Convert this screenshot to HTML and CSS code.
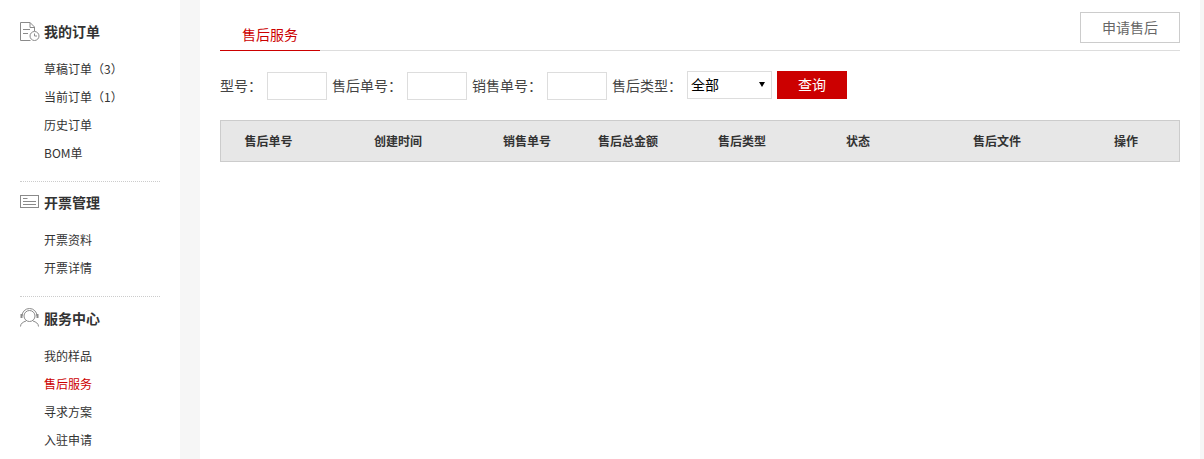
FILE: index.html
```html
<!DOCTYPE html>
<html lang="zh-CN">
<head>
<meta charset="utf-8">
<title>售后服务</title>
<link rel="stylesheet" href="styles.css">
</head>
<body>
<div class="page">
  <aside class="sidebar">
    <section class="group group-first">
      <h3 class="group-title">
        <svg class="icon" width="24" height="20" viewBox="0 0 24 20" fill="none" stroke="#8a8a8a" stroke-width="1">
          <path d="M10.500 19.500H.5V1.500H10L14.500 6V10"/>
          <path d="M10 1.500V6.500H14.500"/>
          <path d="M3 8.500H10M3 12.500H8"/>
          <circle cx="14.500" cy="15" r="4.500"/>
          <path d="M14.500 12.500V15H17"/>
        </svg>
        <span>我的订单</span>
      </h3>
      <ul class="menu">
        <li>草稿订单（3）</li>
        <li>当前订单（1）</li>
        <li>历史订单</li>
        <li>BOM单</li>
      </ul>
    </section>
    <section class="group group-second">
      <h3 class="group-title">
        <svg class="icon" width="24" height="20" viewBox="0 0 24 20" fill="none" stroke="#8a8a8a" stroke-width="1">
          <rect x=".5" y="3.500" width="18" height="12"/>
          <path d="M3 6.500H7.500M3 9.500H16M3 12.500H16"/>
        </svg>
        <span>开票管理</span>
      </h3>
      <ul class="menu">
        <li>开票资料</li>
        <li>开票详情</li>
      </ul>
    </section>
    <section class="group">
      <h3 class="group-title">
        <svg class="icon" width="24" height="20" viewBox="0 0 24 20" fill="none" stroke="#8a8a8a" stroke-width="1">
          <circle cx="9.500" cy="8" r="5.500"/>
          <path d="M2 8A7.500 7.500 0 0 1 17 8"/>
          <path d="M.5 18.500C.5 15.500 3 14 6 13M18.500 18.500C18.500 15.500 16 14 13 13"/>
          <path d="M1.500 6V10M17.500 6V10" stroke-width="2"/>
        </svg>
        <span>服务中心</span>
      </h3>
      <ul class="menu">
        <li>我的样品</li>
        <li class="active">售后服务</li>
        <li>寻求方案</li>
        <li>入驻申请</li>
      </ul>
    </section>
  </aside>
  <main class="content">
    <div class="tabs">
      <span class="tab">售后服务</span>
      <button class="apply" type="button">申请售后</button>
    </div>
    <form class="filters">
      <label class="field">型号：</label>
      <input class="text-input" type="text">
      <label class="field">售后单号：</label>
      <input class="text-input" type="text">
      <label class="field">销售单号：</label>
      <input class="text-input" type="text">
      <label class="field">售后类型：</label>
      <span class="select-wrap">
        <select class="select"><option>全部</option></select>
      </span>
      <button class="search" type="button">查询</button>
    </form>
    <div class="table-head">
      <span>售后单号</span>
      <span>创建时间</span>
      <span>销售单号</span>
      <span>售后总金额</span>
      <span>售后类型</span>
      <span>状态</span>
      <span>售后文件</span>
      <span>操作</span>
    </div>
  </main>
</div>
</body>
</html>
```
FILE: styles.css
```css
html, body {
  margin: 0;
  padding: 0;
  height: 459px;
  overflow: hidden;
  background: #f6f6f6;
  font-family: "Noto Sans CJK SC", "Liberation Sans", sans-serif;
  color: #333;
}

.page {
  display: flex;
  gap: 20px;
  width: 1200px;
  height: 459px;
}

.sidebar {
  width: 180px;
  flex: none;
  box-sizing: border-box;
  padding: 0 20px;
  background: #fff;
}

.group {
  padding-top: 9px;
  border-top: 1px dotted #ccc;
}

.group-first {
  padding-top: 19px;
  border-top: 0;
}

.group-second {
  padding-top: 8px;
}

.group-title {
  display: flex;
  align-items: center;
  height: 24px;
  margin: 0;
  font-size: 14px;
  font-weight: 700;
  line-height: 24px;
  color: #333;
}

.icon {
  flex: none;
  width: 24px;
  height: 20px;
  overflow: visible;
}

.menu {
  list-style: none;
  margin: 0;
  padding: 12px 0 14px 24px;
  font-size: 12px;
  line-height: 28px;
}

.menu .active {
  color: #c00;
}

.content {
  width: 1000px;
  flex: none;
  box-sizing: border-box;
  padding: 0 20px;
  background: #fff;
}

.tabs {
  display: flex;
  justify-content: space-between;
  align-items: flex-start;
  height: 51px;
  box-sizing: border-box;
  padding-top: 12px;
  border-bottom: 1px solid #ddd;
}

.tab {
  width: 100px;
  height: 38px;
  border-bottom: 1px solid #c00;
  text-align: center;
  font-size: 14px;
  line-height: 44px;
  color: #c00;
}

.apply {
  width: 100px;
  height: 31px;
  padding: 0 0 1px;
  border: 1px solid #ccc;
  background: #fff;
  font-family: inherit;
  font-size: 14px;
  color: #666;
}

.filters {
  display: flex;
  align-items: flex-start;
  height: 28px;
  margin: 20px 0 21px;
  font-size: 14px;
}

.field {
  margin-right: 5px;
  white-space: nowrap;
  color: #444;
  line-height: 29px;
}

.text-input {
  width: 60px;
  height: 28px;
  box-sizing: border-box;
  margin: 1px 5px 0 0;
  border: 1px solid #ddd;
  background: #fff;
  padding: 0 4px;
}

.select-wrap {
  position: relative;
  display: block;
  width: 85px;
  height: 28px;
  margin-right: 5px;
}

.select-wrap::after {
  content: "";
  position: absolute;
  right: 7px;
  top: 11px;
  border-style: solid;
  border-width: 5px 3px 0;
  border-color: #000 transparent transparent;
  pointer-events: none;
}

.select {
  appearance: none;
  display: block;
  width: 85px;
  height: 28px;
  box-sizing: border-box;
  padding: 0 3px 2px;
  border: 1px solid #ddd;
  border-radius: 0;
  background: #fff;
  font-family: inherit;
  font-size: 14px;
  color: #000;
}

.search {
  width: 70px;
  height: 28px;
  padding: 0 0 2px;
  border: 0;
  background: #c00;
  font-family: inherit;
  font-size: 14px;
  color: #fff;
}

.table-head {
  display: grid;
  grid-template-columns: 95px 164px 94px 108px 120px 112px 166px 92px;
  align-items: center;
  height: 42px;
  box-sizing: border-box;
  padding-bottom: 1px;
  border: 1px solid #ccc;
  background: #e7e7e7;
  font-size: 12px;
  font-weight: 700;
  text-align: center;
}
```
